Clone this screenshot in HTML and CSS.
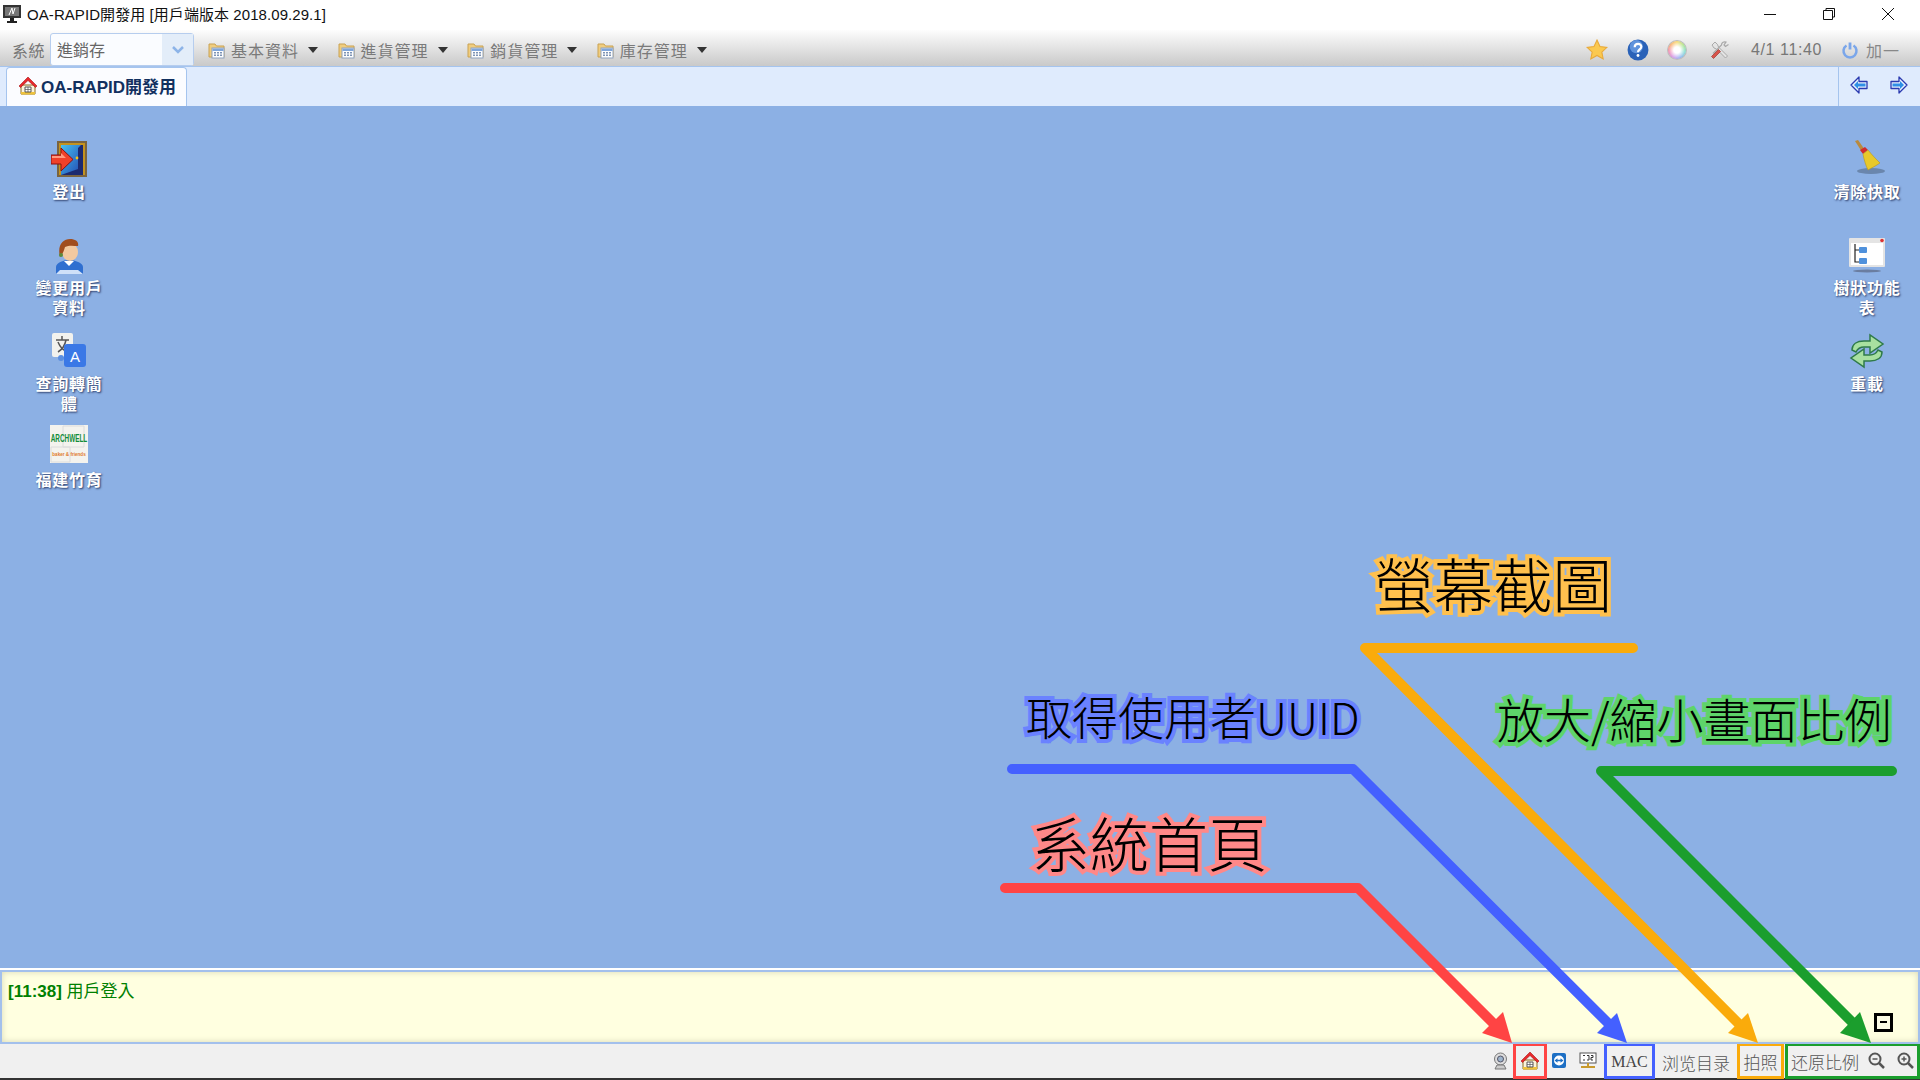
FILE: index.html
```html
<!DOCTYPE html>
<html lang="zh-Hant">
<head>
<meta charset="utf-8">
<title>OA-RAPID開發用</title>
<link rel="stylesheet" href="styles.css">
</head>
<body>
<svg class="defs" width="0" height="0">
  <defs>
    <symbol id="folder" viewBox="0 0 18 18">
      <path d="M1 3h6l1.500 2H16v11H1z" fill="#f0cd7e" stroke="#c9a253"/>
      <rect x="4" y="7" width="12" height="10" fill="#fdfdfd" stroke="#8fa2bd"/>
      <rect x="4.500" y="7.500" width="11" height="2.500" fill="#7fa6dc"/>
      <path d="M6 11h2v1.500H6zM9 11h2v1.500H9zM12 11h2v1.500h-2zM6 13.500h2V15H6zM9 13.500h2V15H9zM12 13.500h2V15h-2z" fill="#7d93b5"/>
    </symbol>
    <symbol id="house" viewBox="0 0 20 20">
      <path d="M3 9h14v9H3z" fill="#fbf3dc" stroke="#8a6a20"/>
      <path d="M3 16h14v2.500H3z" fill="#eec23c"/>
      <path d="M10 1 1 10l1.500 1.500L10 4.500l7.500 7 1.500-1.500z" fill="#e8292c" stroke="#a81414" stroke-width=".6"/>
      <path d="M7 11h6v5H7z" fill="#fff" stroke="#555"/>
      <path d="M10 11v5M7 13.500h6" stroke="#555" stroke-width=".7"/>
    </symbol>
    <symbol id="nav-arrow" viewBox="0 0 18 18">
      <path d="M1 9l8-8v4.500h8v7H9V17z" fill="#eaf2ff" stroke="#2a3ab0" stroke-width="1.300" stroke-linejoin="round"/>
      <path d="M4 9l4-4v2.500h7.500v3H8V13z" fill="#2f8fe6"/>
    </symbol>
  </defs>
</svg>

<div class="app">
  <header class="titlebar">
    <svg class="app-icon" width="20" height="20" viewBox="0 0 20 20"><rect x="1" y="1" width="18" height="13" fill="#333"/><rect x="3" y="3" width="14" height="9" fill="#777"/><path d="M7 11l3-7 1 6 2-6" stroke="#fff" fill="none"/><path d="M8 14h4v3H8zM5 17h10v2H5z" fill="#222"/></svg>
    <span class="title-text">OA-RAPID開發用 [用戶端版本 2018.09.29.1]</span>
    <div class="win-controls">
      <svg width="14" height="14" viewBox="0 0 14 14"><path d="M1 7.500h12" stroke="#111"/></svg>
      <svg width="14" height="14" viewBox="0 0 14 14"><path d="M1.500 3.500h9v9h-9zM4 3.500V1.500h8.500v8.500h-2" fill="none" stroke="#111"/></svg>
      <svg width="14" height="14" viewBox="0 0 14 14"><path d="M1 1l12 12M13 1 1 13" stroke="#111"/></svg>
    </div>
  </header>

  <nav class="toolbar">
    <span class="sys-label">系統</span>
    <div class="combo"><span class="combo-text">進銷存</span><span class="combo-arrow"><svg width="14" height="10" viewBox="0 0 14 10"><path d="M2 2l5 5 5-5" fill="none" stroke="#8db4e8" stroke-width="2.500"/></svg></span></div>
    <div class="menu-item"><svg class="folder-icon"><use href="#folder"/></svg><span class="menu-text">基本資料</span><span class="caret"></span></div>
    <div class="menu-item"><svg class="folder-icon"><use href="#folder"/></svg><span class="menu-text">進貨管理</span><span class="caret"></span></div>
    <div class="menu-item"><svg class="folder-icon"><use href="#folder"/></svg><span class="menu-text">銷貨管理</span><span class="caret"></span></div>
    <div class="menu-item"><svg class="folder-icon"><use href="#folder"/></svg><span class="menu-text">庫存管理</span><span class="caret"></span></div>
    <div class="tool-right">
      <svg width="22" height="22" viewBox="0 0 20 20"><path d="M10 1l2.700 5.800 6.300.8-4.600 4.300 1.200 6.200L10 15l-5.600 3.100 1.200-6.200L1 7.600l6.300-.8z" fill="#fbc94f" stroke="#e8a93a"/></svg>
      <svg class="tool-help" width="20" height="20" viewBox="0 0 20 20"><circle cx="10" cy="10" r="9.500" fill="#2a62b8"/><circle cx="8.500" cy="7" r="6" fill="#5f93dc"/><path d="M7 7.500c0-4 6-4 6-.5 0 2.500-3 2.500-3 5" fill="none" stroke="#fff" stroke-width="2"/><circle cx="10" cy="15" r="1.300" fill="#fff"/></svg>
      <span class="color-wheel"></span>
      <svg class="tool-wrench" width="20" height="20" viewBox="0 0 20 20"><path d="M2 5l3-3 2.500 2.500 1 2.500 9 9-2 2-9-9-2.500-1z" fill="#e4e4e4" stroke="#9a9a9a" stroke-width=".8"/><path d="M18.500 4.500l-3 2-1.500-1.500 2-3c-2-.6-4.500.5-4.500 3L3 13.500" fill="none" stroke="#a8a8a8" stroke-width="1.200"/><path d="M1.500 16.500l7-7 2 2-7 7z" fill="#d9534a" stroke="#a2443c" stroke-width=".8"/></svg>
      <span class="clock">4/1 11:40</span>
      <svg class="power" width="18" height="18" viewBox="0 0 18 18"><path d="M5.500 4.500a6.500 6.500 0 1 0 7 0" fill="none" stroke="#7aa6ea" stroke-width="2.500"/><path d="M9 1.500v7" stroke="#7aa6ea" stroke-width="2.800"/></svg>
      <span class="user-name">加一</span>
    </div>
  </nav>

  <div class="tabbar">
    <div class="tab"><svg class="tab-icon"><use href="#house"/></svg><span>OA-RAPID開發用</span></div>
    <div class="tab-nav">
      <svg width="18" height="18"><use href="#nav-arrow"/></svg>
      <svg class="flip" width="18" height="18"><use href="#nav-arrow"/></svg>
    </div>
  </div>

  <main class="desktop">
    <div class="tiles">
      <div class="tile">
        <svg class="tile-icon" viewBox="0 0 36 36"><defs><linearGradient id="door" x1="0" y1="0" x2="1" y2="1"><stop offset="0" stop-color="#46c0f0"/><stop offset="1" stop-color="#2148b0"/></linearGradient></defs><rect x="6" y="0" width="30" height="36" fill="#7a6440"/><rect x="8" y="2" width="26" height="32" fill="#c4931f"/><rect x="10" y="4" width="22" height="30" fill="#1c2a70"/><path d="M10 4h20l-3 3v21l-17 6z" fill="url(#door)"/><circle cx="26" cy="17" r="1.400" fill="#f5c518"/><path d="M0 14h10V7l12 11.500L10 30v-7H0z" fill="#f0412a" stroke="#8a1010"/><path d="M1 15h9v-3l5 5H1z" fill="#ff9a80"/></svg>
        <span class="tile-label">登出</span>
      </div>
      <div class="tile">
        <svg class="tile-icon tile-icon-low" viewBox="0 0 36 36"><path d="M5 35v-7c0-4 7-7 13-7s14 3 14 7v7z" fill="#2f6fd0"/><path d="M5 35l4-4h18l5 4z" fill="#cfe0f8"/><path d="M13 22l5 5 5-5z" fill="#fff"/><ellipse cx="19" cy="13" rx="8" ry="9" fill="#f2c9a0"/><path d="M9 18C6 6 12 0 19 0c6 0 9 3 8 7-4 0-9-1-13 1-1 3-2 7-5 10z" fill="#a04d1e"/><circle cx="10" cy="16" r="2" fill="#5b8a3a"/></svg>
        <span class="tile-label">變更用戶<br>資料</span>
      </div>
      <div class="tile">
        <svg class="tile-icon" viewBox="0 0 36 36"><rect x="1" y="0" width="21" height="24" rx="2" fill="#f2f2ee"/><path d="M5 7h13M11 3v4M7 19c5-3 7-7 8-12M7 9c2 5 6 9 10 10" fill="none" stroke="#555" stroke-width="1.500"/><rect x="13" y="11" width="22" height="23" rx="3" fill="#3a78e6"/><text class="glyph-a" x="24" y="29" text-anchor="middle">A</text><circle cx="10" cy="25" r="3" fill="#5a8ee0"/></svg>
        <span class="tile-label">查詢轉簡<br>體</span>
      </div>
      <div class="tile">
        <svg class="logo-archwell" viewBox="0 0 38 38"><rect width="38" height="38" fill="#f4f3ee"/><path d="M13 1h21v21H13zM1 22h19v15H1z" fill="none" stroke="#dcdcdc"/><text class="logo-main" text-anchor="middle" transform="translate(19 17) scale(1 1.700)">ARCHWELL</text><text class="logo-sub" x="19" y="31" text-anchor="middle">baker &amp; friends</text></svg>
        <span class="tile-label">福建竹育</span>
      </div>
    </div>
    <div class="tiles">
      <div class="tile">
        <svg class="tile-icon tile-icon-up" viewBox="0 0 36 36"><ellipse cx="22" cy="32" rx="14" ry="3" fill="#6a86ad"/><path d="M6 2l3-1 7 10-3 2z" fill="#b98a3e"/><path d="M11 11l5-3 3 3-5 4z" fill="#d02c2c"/><path d="M14 15l5-4c4 5 8 9 12 13-4 3-9 5-12 7-2-4-4-10-5-16z" fill="#e8c92a" stroke="#b8971c" stroke-width=".6"/></svg>
        <span class="tile-label">清除快取</span>
      </div>
      <div class="tile">
        <svg class="tile-icon" viewBox="0 0 36 36"><ellipse cx="18" cy="34" rx="14" ry="1.500" fill="#6a7da0"/><rect x="0" y="1" width="36" height="29" rx="1" fill="#e4e4e4"/><rect x="2" y="6" width="32" height="22" fill="#fff"/><circle cx="33" cy="3.500" r="1.800" fill="#d33"/><path d="M6 7v18h6M6 13h6" fill="none" stroke="#222" stroke-width="1.200"/><rect x="10" y="10" width="8" height="6" rx="1" fill="#4f91dc"/><rect x="10" y="21" width="8" height="6" rx="1" fill="#4f91dc"/></svg>
        <span class="tile-label">樹狀功能<br>表</span>
      </div>
      <div class="tile">
        <svg class="tile-icon" viewBox="0 0 36 36"><path d="M3 17c0-6 5-9 12-9h6V2l13 9-13 9v-6h-6c-4 0-6 1-8 5z" fill="#a8e0a0" stroke="#2f7a4a" stroke-width="1.500"/><path d="M33 19c0 6-5 9-12 9h-6v6L2 25l13-9v6h6c4 0 6-1 8-5z" fill="#a8e0a0" stroke="#2f7a4a" stroke-width="1.500"/></svg>
        <span class="tile-label">重載</span>
      </div>
    </div>
  </main>

  <section class="log">
    <p class="log-line"><b class="log-time">[11:38]</b> <span class="log-msg">用戶登入</span></p>
    <span class="collapse"></span>
  </section>

  <footer class="statusbar">
    <svg class="st-icon" width="17" height="18" viewBox="0 0 17 18"><circle cx="8.500" cy="7" r="6" fill="#ddd" stroke="#777"/><circle cx="8.500" cy="7" r="3" fill="#9db4cc" stroke="#556"/><path d="M3 17l2-4h7l2 4z" fill="#ccc" stroke="#777"/></svg>
    <div class="st-box box-red"><svg width="20" height="20"><use href="#house"/></svg></div>
    <svg class="st-icon" width="17" height="18" viewBox="0 0 17 18"><rect x="1" y="1" width="14" height="15" rx="2" fill="#1d6fc4"/><circle cx="8" cy="8.500" r="5" fill="#fff"/><path d="M3.500 8.500l3-2.200v1.400h3V6.300l3 2.200-3 2.200V9.300h-3v1.400z" fill="#1d6fc4"/></svg>
    <svg class="st-icon st-ip" width="18" height="18" viewBox="0 0 18 18"><rect x="1" y="1" width="16" height="10" fill="#fff" stroke="#555"/><path d="M4 3.500h2M4 8h2M8 3.500h2v4.500H8M12 3.500h2v2h-2v2.500h2" fill="none" stroke="#333"/><path d="M9 11v4M2 15h14" stroke="#c89a2c" stroke-width="2"/></svg>
    <div class="st-box box-blue"><span class="st-latin">MAC</span></div>
    <div class="st-item"><span class="st-text">浏览目录</span></div>
    <div class="st-box box-orange"><span class="st-text">拍照</span></div>
    <div class="st-box box-green">
      <span class="st-text">还原比例</span>
      <svg class="zoom-out" width="17" height="17" viewBox="0 0 17 17"><circle cx="7" cy="7" r="5.500" fill="none" stroke="#555" stroke-width="2"/><path d="M11 11l5 5" stroke="#555" stroke-width="2.500"/><path d="M4.500 7h5" stroke="#555" stroke-width="1.500"/></svg>
      <svg class="zoom-in" width="17" height="17" viewBox="0 0 17 17"><circle cx="7" cy="7" r="5.500" fill="none" stroke="#555" stroke-width="2"/><path d="M11 11l5 5" stroke="#555" stroke-width="2.500"/><path d="M4.500 7h5M7 4.500v5" stroke="#555" stroke-width="1.500"/></svg>
    </div>
  </footer>
</div>

<svg class="arrows" width="1920" height="1080" viewBox="0 0 1920 1080">
  <g fill="none" stroke-width="10" stroke-linecap="round" stroke-linejoin="round">
    <path d="M1005 888H1358L1500 1030" stroke="#ff4444"/>
    <path d="M1012 769H1353L1615 1030" stroke="#4460ff"/>
    <path d="M1633 648H1365L1745 1030" stroke="#faab0b"/>
    <path d="M1892 771H1601L1860 1030" stroke="#1b9e2d"/>
  </g>
  <path d="M1503 1012 1482 1033 1512 1043z" fill="#ff4444"/>
  <path d="M1617 1013 1597 1033 1627 1043z" fill="#4460ff"/>
  <path d="M1748 1013 1728 1033 1758 1043z" fill="#faab0b"/>
  <path d="M1860 1012 1840 1033 1871 1043z" fill="#1b9e2d"/>
</svg>
<span class="note note-shot">螢幕截圖</span>
<span class="note note-uuid">取得使用者<span class="note-latin">UUID</span></span>
<span class="note note-zoom">放大/縮小畫面比例</span>
<span class="note note-home">系統首頁</span>
</body>
</html>
```
FILE: styles.css
```css
* { box-sizing: border-box; }
html, body { margin: 0; padding: 0; }
body {
  width: 1920px;
  height: 1080px;
  overflow: hidden;
  position: relative;
  font-family: "Liberation Sans", "Noto Sans CJK TC", sans-serif;
}
.defs { position: absolute; }
.app { display: flex; flex-direction: column; height: 1080px; background: #fff; }

.titlebar { height: 30px; display: flex; align-items: center; padding: 0 0 3px 2px; background: #fff; flex: none; }
.app-icon { flex: none; }
.title-text { margin-left: 5px; font-size: 15px; letter-spacing: .07px; color: #111; }
.win-controls { margin-left: auto; display: flex; gap: 45px; padding-right: 25px; }

.toolbar {
  height: 36px; flex: none; display: flex; align-items: center; padding: 3px 0 0 12px;
  background: linear-gradient(#fdfdfd, #f0f0f0 25%, #c9c9c9);
  color: #777; font-size: 16px;
}
.sys-label { width: 38px; letter-spacing: .5px; }
.combo {
  width: 144px; height: 33px; display: flex; border: 1px solid #b6cdee; border-radius: 3px;
  background: #fafcff;
}
.combo-text { flex: 1; padding: 1px 0 0 6px; line-height: 31px; color: #666; }
.combo-arrow { width: 31px; background: #e3edf9; display: flex; align-items: center; justify-content: center; }
.menu-item { width: 129.600px; display: flex; align-items: center; }
.combo + .menu-item { margin-left: 14px; }
.folder-icon { width: 18px; height: 18px; flex: none; }
.menu-text { margin-left: 5px; width: 72px; letter-spacing: 1px; color: #7a7a7a; }
.caret { width: 0; height: 0; margin-left: 5px; border-left: 5.500px solid transparent; border-right: 5.500px solid transparent; border-top: 6px solid #333; }
.tool-right { margin-left: auto; display: flex; align-items: center; padding-right: 20px; }
.tool-right svg { flex: none; }
.tool-help { margin-left: 19px; width: 22px; height: 22px; }
.color-wheel {
  width: 18px; height: 18px; margin-left: 19px; border-radius: 50%; flex: none;
  background: radial-gradient(circle, #fff 0 25%, transparent 75%), conic-gradient(#f7d35a, #9fe07a, #6fd6c8, #7fa8ee, #c98ae8, #ee7aa8, #f7a05a, #f7d35a);
  box-shadow: 0 0 0 1px #bdbdbd;
}
.tool-wrench { margin-left: 24px; }
.clock { margin-left: 21px; font-size: 16px; color: #777; letter-spacing: .6px; }
.tool-right .power { margin-left: 19px; }
.user-name { margin-left: 7px; letter-spacing: 1px; color: #888; }

.tabbar {
  height: 40px; flex: none; display: flex; background: #dfebfd;
  border-top: 1px solid #a5c4ee; padding-left: 6px;
}
.tab {
  width: 181px; height: 39px; display: flex; align-items: center; padding: 0 0 3px 11px; gap: 3px;
  background: #fbfcff; border: 1px solid #a5c4ee; border-bottom: 0; border-radius: 4px 4px 0 0;
  font-weight: 700; font-size: 17px; color: #12305f;
}
.tab-icon { width: 20px; height: 20px; flex: none; }
.tab-nav { margin-left: auto; width: 80px; margin-right: 2px; border-left: 1px solid #a5c4ee; display: flex; align-items: center; justify-content: center; gap: 22px; padding-bottom: 4px; }
.flip { transform: scaleX(-1); }

.desktop { flex: 1; background: #8cb0e4; display: flex; justify-content: space-between; padding: 35px 5px 0 21px; }
.tiles { width: 96px; display: flex; flex-direction: column; }
.tile { height: 96px; display: flex; flex-direction: column; align-items: center; }
.tile-icon { width: 36px; height: 36px; flex: none; }
.tile-icon-low { position: relative; top: 2px; }
.tile-icon-up { position: relative; top: -2px; }
.tile-label {
  margin-top: 6px; color: #fff; font-size: 16px; line-height: 20px; font-weight: 700; text-align: center;
  letter-spacing: .7px; text-shadow: 1px 1px 2px #2a3a66;
}
.glyph-a { font: 15px "Liberation Sans", sans-serif; fill: #fff; }
.logo-archwell { width: 38px; height: 38px; flex: none; margin: -4px 0 2px; }
.logo-main { font: 700 6.400px "Liberation Sans", sans-serif; fill: #138c3a; }
.logo-sub { font: 700 4.600px "Liberation Sans", sans-serif; fill: #e07a2a; }

.log {
  height: 74px; flex: none; position: relative; background: #ffffe0; margin-top: 2px;
  border: 2px solid #a3c0ec;
  box-shadow: inset 0 0 6px #d8d8b8; padding: 10px 6px;
}
.log-line { margin: 0; font-size: 17px; line-height: 20px; color: #008000; }
.log-time { font-weight: 700; }
.collapse { position: absolute; right: 25px; top: 41px; width: 19px; height: 19px; border: 3px solid #000; background: #fbfbe4; }
.collapse::after { content: ""; position: absolute; left: 3px; top: 5px; width: 7px; height: 2px; background: #000; }

.statusbar {
  height: 36px; flex: none; display: flex; align-items: center; justify-content: flex-end;
  background: #f0f0f0; border-bottom: 2px solid #333;
}
.st-icon { flex: none; }
.st-box { height: 36px; border: 3px solid; display: flex; align-items: center; justify-content: center; flex: none; }
.box-red { width: 34px; border-color: #ff4444; margin: -1px 4px 0 4px; }
.box-blue { width: 51px; border-color: #4460ff; margin: -1px 0 0; }
.st-ip { margin: 0 7px 0 11px; }
.st-item { width: 82px; display: flex; justify-content: center; }
.box-orange { width: 47px; border-color: #faab0b; margin: -1px 1px 0 0; }
.box-green { width: 135px; border-color: #1b9e2d; margin: -1px 0 0; justify-content: flex-start; padding-left: 3px; }
.st-text { font-size: 17px; font-weight: 300; color: #555; font-family: "Noto Sans CJK SC", sans-serif; white-space: nowrap; position: relative; top: 1px; }
.st-latin { font: 16px "Liberation Serif", serif; color: #444; position: relative; top: 1px; }
.zoom-out { margin-left: 9px; }
.zoom-in { margin-left: 12px; }

.arrows { position: absolute; left: 0; top: 0; pointer-events: none; }
.note {
  position: absolute; color: #000; font-family: "Noto Sans CJK TC", sans-serif; white-space: nowrap;
  -webkit-text-stroke-width: 8px; paint-order: stroke fill; line-height: 1; font-weight: 300;
}
.note-shot { left: 1374px; top: 553px; font-size: 59.500px; -webkit-text-stroke-color: #ffc04d; }
.note-uuid { left: 1026px; top: 692px; font-size: 46px; -webkit-text-stroke-color: #6a82ff; }
.note-latin { font-size: 44px; }
.note-zoom { left: 1497px; top: 694px; font-size: 47px; -webkit-text-stroke-color: #5ed46a; }
.note-home { left: 1031px; top: 812px; font-size: 59px; -webkit-text-stroke-color: #ff8888; }
```
